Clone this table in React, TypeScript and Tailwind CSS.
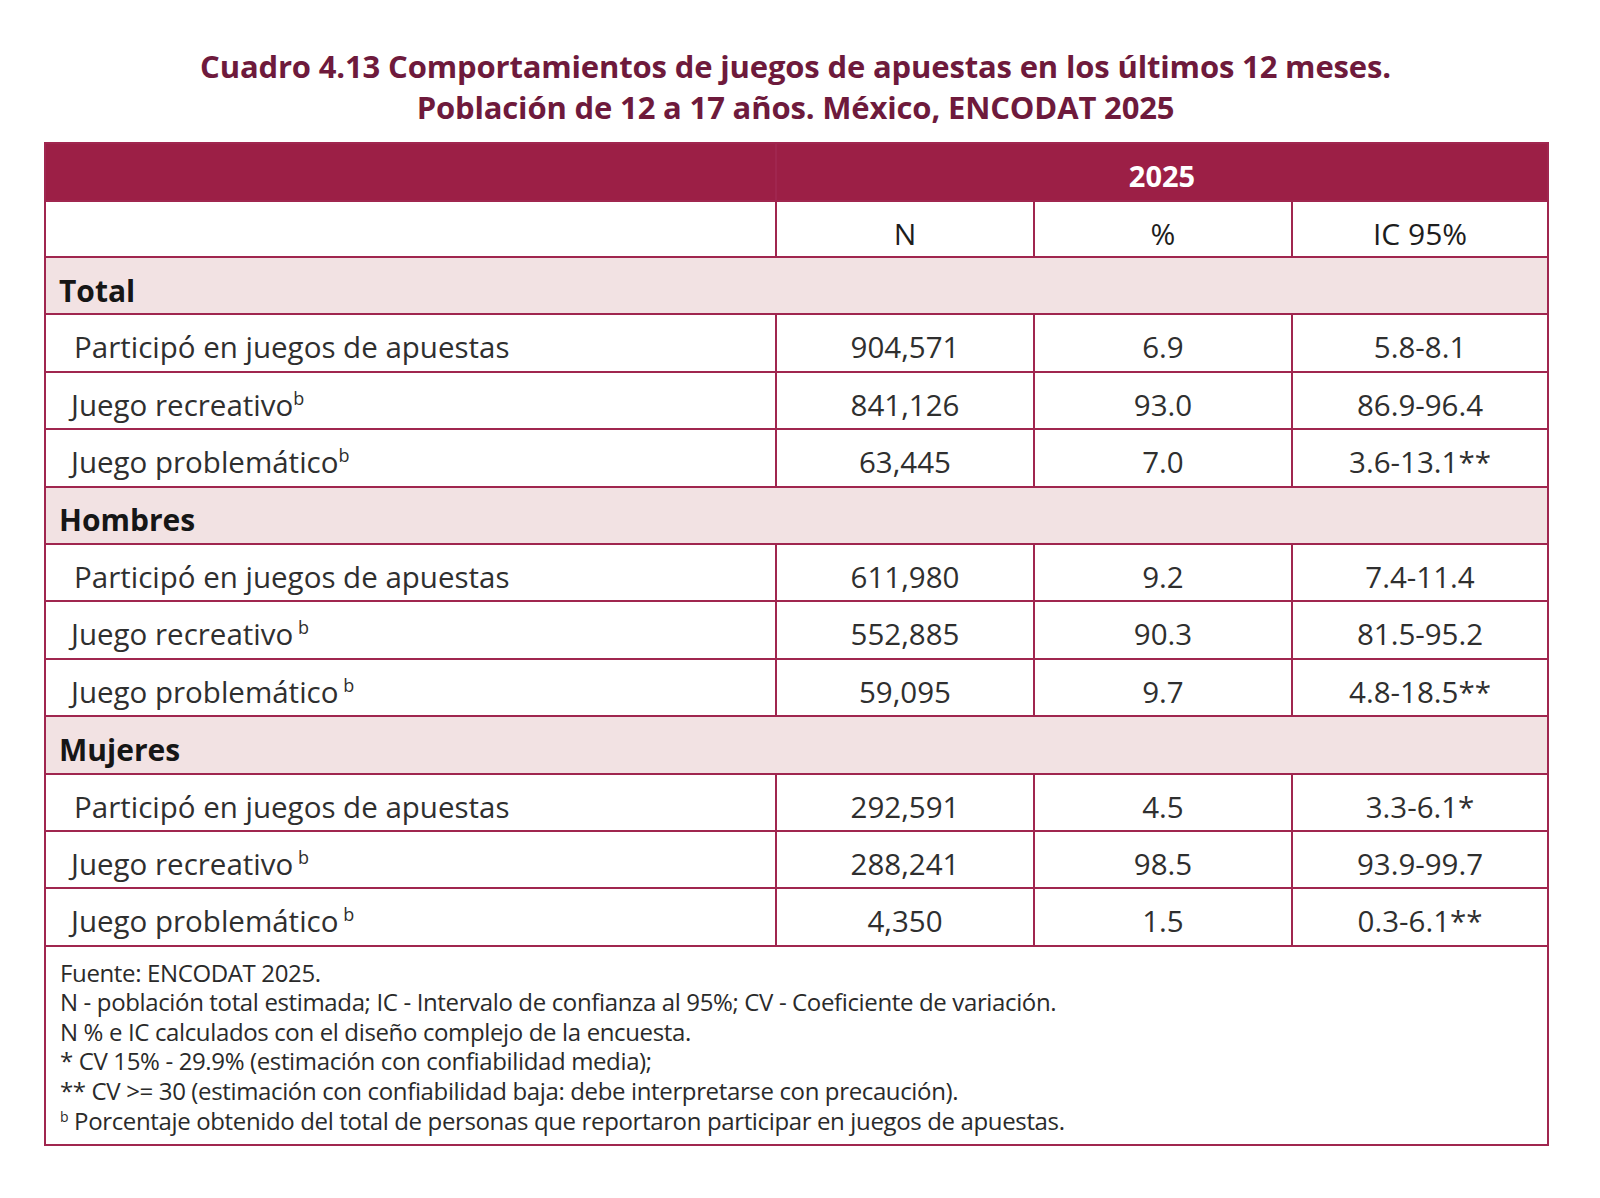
import React from "react";

const B = "border-[2px] border-[#a0264f]";

type Row = { label: string; space: boolean; n: string; p: string; ic: string };

const sections: { title: string; rows: Row[] }[] = [
  {
    title: "Total",
    rows: [
      { label: "Participó en juegos de apuestas", space: false, n: "904,571", p: "6.9", ic: "5.8-8.1" },
      { label: "Juego recreativo", space: false, n: "841,126", p: "93.0", ic: "86.9-96.4" },
      { label: "Juego problemático", space: false, n: "63,445", p: "7.0", ic: "3.6-13.1**" },
    ],
  },
  {
    title: "Hombres",
    rows: [
      { label: "Participó en juegos de apuestas", space: true, n: "611,980", p: "9.2", ic: "7.4-11.4" },
      { label: "Juego recreativo", space: true, n: "552,885", p: "90.3", ic: "81.5-95.2" },
      { label: "Juego problemático", space: true, n: "59,095", p: "9.7", ic: "4.8-18.5**" },
    ],
  },
  {
    title: "Mujeres",
    rows: [
      { label: "Participó en juegos de apuestas", space: true, n: "292,591", p: "4.5", ic: "3.3-6.1*" },
      { label: "Juego recreativo", space: true, n: "288,241", p: "98.5", ic: "93.9-99.7" },
      { label: "Juego problemático", space: true, n: "4,350", p: "1.5", ic: "0.3-6.1**" },
    ],
  },
];

export default function App() {
  return (
    <div
      className="w-[1600px] h-[1198px] bg-white pt-[46px] pl-[44px]"
      style={{ fontFamily: '"Open Sans", "Noto Sans", sans-serif' }}
    >
      <div className="w-[1503px] text-center text-[#6e1a3c] font-bold text-[31px] leading-[41px] tracking-[-0.005em]">
        <div>Cuadro 4.13 Comportamientos de juegos de apuestas en los últimos 12 meses.</div>
        <div>Población de 12 a 17 años. México, ENCODAT 2025</div>
      </div>
      <table className="mt-[14px] w-[1503px] border-collapse table-fixed">
        <colgroup>
          <col className="w-[731px]" />
          <col className="w-[258px]" />
          <col className="w-[258px]" />
          <col className="w-[256px]" />
        </colgroup>
        <thead>
          <tr className="h-[58px] bg-[#9c1f46]">
            <th className={B}></th>
            <th colSpan={3} className={`${B} text-white font-bold text-[29px] pt-[8px]`}>
              2025
            </th>
          </tr>
          <tr className="h-[56px]">
            <th className={B}></th>
            <th className={`${B} pt-[9px] font-normal text-[30px] text-[#1d1d1d]`}>N</th>
            <th className={`${B} pt-[9px] font-normal text-[30px] text-[#1d1d1d]`}>%</th>
            <th className={`${B} pt-[9px] font-normal text-[30px] text-[#1d1d1d]`}>IC 95%</th>
          </tr>
        </thead>
        <tbody>
          {sections.map((s) => (
            <React.Fragment key={s.title}>
              <tr className="h-[57.4px] bg-[#f2e2e3]">
                <td colSpan={4} className={`${B} pl-[13px] pt-[9px] font-bold text-[30px] text-[#161616]`}>
                  {s.title}
                </td>
              </tr>
              {s.rows.map((r, i) => (
                <tr key={i} className="h-[57.4px] text-[29.5px] text-[#2f2f2f]">
                  <td className={`${B} pt-[9px] ${i === 0 ? "pl-[28px]" : "pl-[25px]"}`}>
                    {r.label}
                    {i > 0 && (
                      <sup className="text-[18px] relative top-[-11px]">{r.space ? " b" : "b"}</sup>
                    )}
                  </td>
                  <td className={`${B} pt-[9px] text-center`}>{r.n}</td>
                  <td className={`${B} pt-[9px] text-center`}>{r.p}</td>
                  <td className={`${B} pt-[9px] text-center`}>{r.ic}</td>
                </tr>
              ))}
            </React.Fragment>
          ))}
          <tr>
            <td
              colSpan={4}
              className={`${B} pl-[14px] pt-[11px] pb-[9px] text-[24px] leading-[29.6px] text-[#2a2a2a] tracking-[-0.015em]`}
            >
              <div>Fuente: ENCODAT 2025.</div>
              <div>N - población total estimada; IC - Intervalo de confianza al 95%; CV - Coeficiente de variación.</div>
              <div>N % e IC calculados con el diseño complejo de la encuesta.</div>
              <div>* CV 15% - 29.9% (estimación con confiabilidad media);</div>
              <div>** CV &gt;= 30 (estimación con confiabilidad baja: debe interpretarse con precaución).</div>
              <div>
                <sup className="text-[14px] relative top-[-8px]">b</sup> Porcentaje obtenido del total de personas que reportaron participar en juegos de apuestas.
              </div>
            </td>
          </tr>
        </tbody>
      </table>
    </div>
  );
}
